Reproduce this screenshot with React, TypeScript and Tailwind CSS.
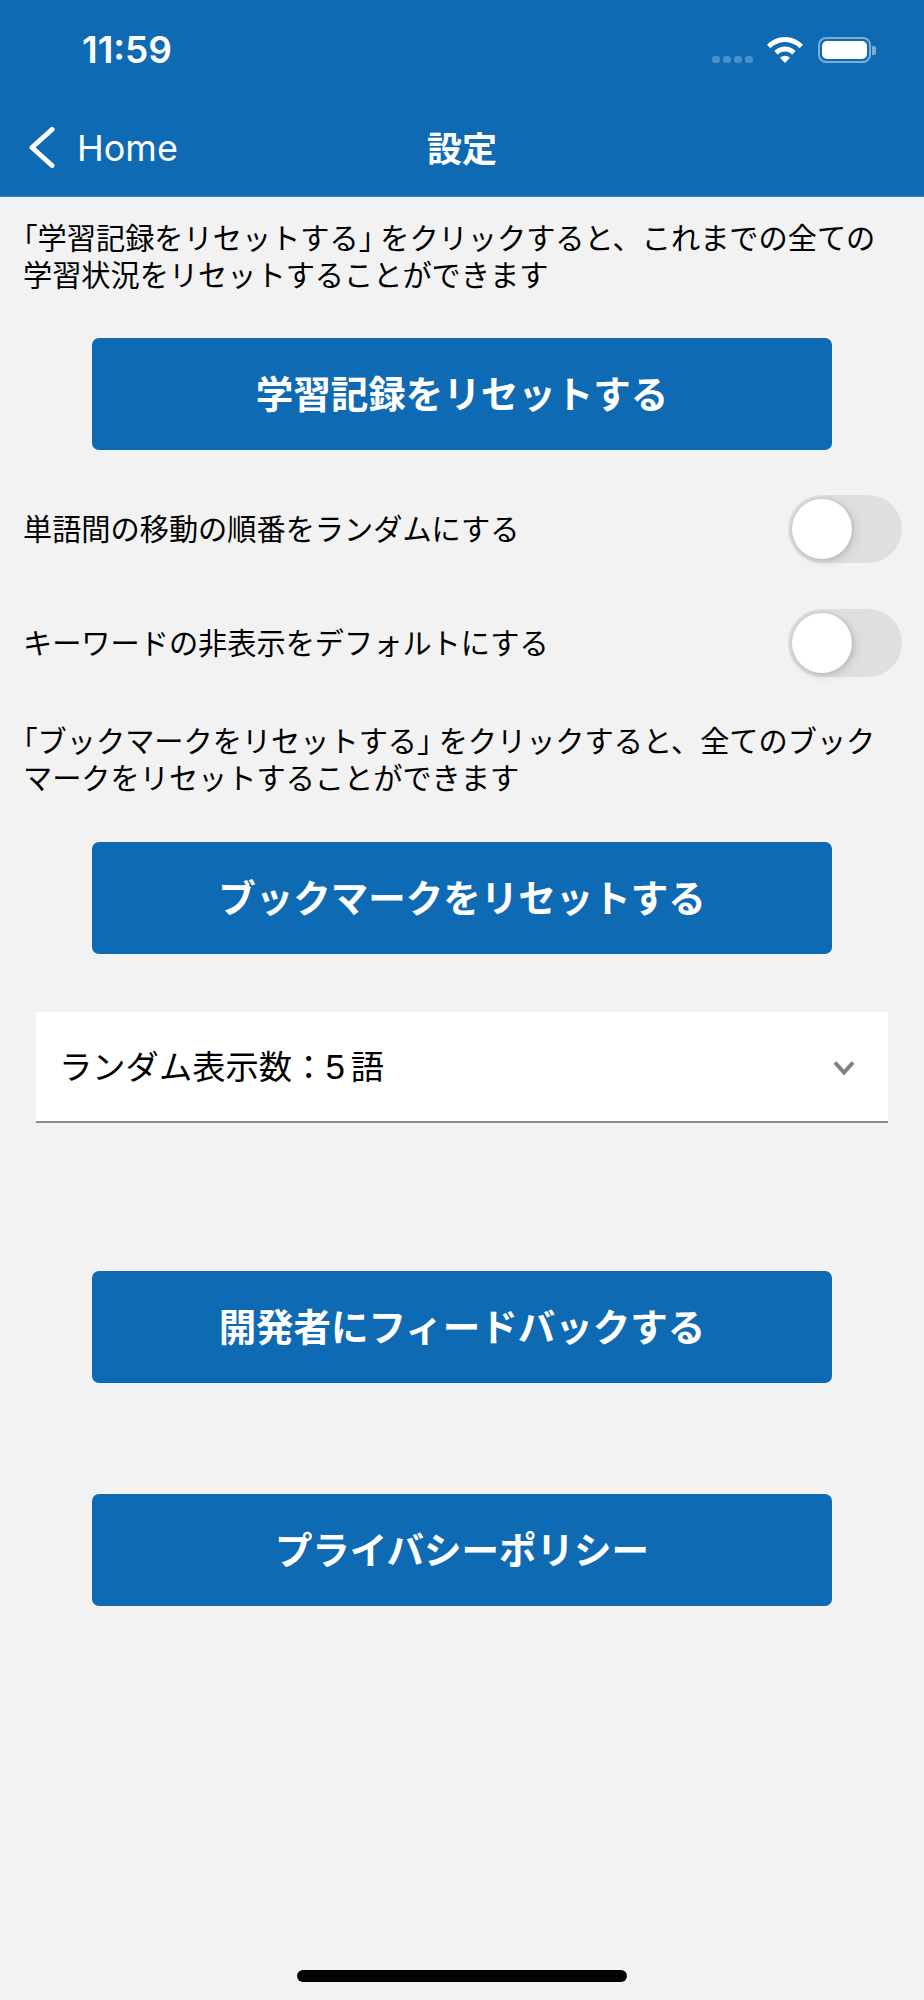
const font = "font-['Noto_Sans_CJK_JP',sans-serif]";

function ActionButton({ label }: { label: string }) {
  return (
    <button className="mx-auto flex h-[112px] w-[740px] items-center justify-center rounded-[7px] bg-[#0f6ab4] pb-[3px] text-[37.5px] font-bold text-white">
      {label}
    </button>
  );
}

function ToggleRow({ label }: { label: string }) {
  return (
    <div className="flex h-[70px] items-center justify-between pl-[23px] pr-[22px]">
      <span className="pb-[5px] text-[29.2px] leading-[40px] text-black">{label}</span>
      <div className="flex h-[68px] w-[114px] items-center rounded-full bg-[#dfdfe1] pl-[4px]">
        <div className="h-[60px] w-[60px] rounded-full bg-white shadow-[0_0_4px_rgba(0,0,0,0.15),3px_3px_8px_rgba(0,0,0,0.12)]" />
      </div>
    </div>
  );
}

function Quoted({ text, rest, second }: { text: string; rest: string; second: string }) {
  return (
    <div className="pl-[23px] text-[29.2px] leading-[37px] text-black whitespace-nowrap">
      <p>
        <span className="[font-feature-settings:'halt']">「</span>
        <span>{text}</span>
        <span className="mr-[7px] [font-feature-settings:'halt']">」</span>
        <span>{rest}</span>
      </p>
      <p>{second}</p>
    </div>
  );
}

export default function App() {
  return (
    <div className={`${font} flex h-[2000px] w-[924px] flex-col overflow-hidden bg-[#f2f2f2]`}>
      {/* Status bar + nav */}
      <div className="h-[197px] shrink-0 border-b border-[#3a80bb] bg-[#0f6ab4]">
        <div className="flex h-[100px] items-center justify-between pl-[82px] pr-[48px]">
          <span className="font-['Inter',sans-serif] text-[37px] font-semibold text-white">11:59</span>
          <div className="flex items-center">
            <div className="mr-[14px] mt-[19px] flex gap-[3px]">
              {[0, 1, 2, 3].map((i) => (
                <div key={i} className="h-[7px] w-[8px] rounded-[3px] bg-white/25" />
              ))}
            </div>
            <svg width="36" height="26" viewBox="1.5 4 33 23" preserveAspectRatio="none" className="mr-[15px]">
              <path d="M18 4C11.5 4 6 6.6 1.5 10.8L4.6 14C8.2 10.6 12.8 8.5 18 8.5S27.8 10.6 31.4 14L34.5 10.8C30 6.6 24.500 4 18 4Z" fill="#fff" />
              <path d="M18 12.500C14.300 12.500 10.900 14 8.300 16.400L11.400 19.600C13.200 17.900 15.500 16.900 18 16.900S22.800 17.900 24.600 19.600L27.700 16.400C25.100 14 21.700 12.500 18 12.500Z" fill="#fff" />
              <path d="M18 20.500C16.300 20.500 14.700 21.200 13.500 22.300L18 27L22.500 22.300C21.300 21.200 19.700 20.500 18 20.500Z" fill="#fff" />
            </svg>
            <div className="flex items-center">
              <div className="flex h-[26px] w-[53px] items-center justify-center rounded-[8px] border-2 border-white/45">
                <div className="h-[18px] w-[45px] rounded-[5px] bg-white" />
              </div>
              <div className="ml-[1px] h-[9px] w-[4px] rounded-r-[2px] bg-white/45" />
            </div>
          </div>
        </div>
        <div className="relative flex h-[94px] items-center justify-center">
          <div className="absolute left-[28px] top-[26px] flex items-center">
            <svg width="27" height="44" viewBox="0 0 27 44" fill="none">
              <path d="M24 3.500L4 21.500L24 39.500" stroke="#fff" strokeWidth="5" strokeLinecap="round" strokeLinejoin="round" />
            </svg>
            <span className="ml-[22px] font-['Inter',sans-serif] text-[36px] leading-[44px] text-white">Home</span>
          </div>
          <span className="text-[35px] font-bold text-white">設定</span>
        </div>
      </div>

      {/* Content */}
      <div className="mt-[21px]">
        <Quoted text="学習記録をリセットする" rest="をクリックすると、これまでの全ての" second="学習状況をリセットすることができます" />
      </div>
      <div className="mt-[46px]">
        <ActionButton label="学習記録をリセットする" />
      </div>
      <div className="mt-[44px]">
        <ToggleRow label="単語間の移動の順番をランダムにする" />
      </div>
      <div className="mt-[44px]">
        <ToggleRow label="キーワードの非表示をデフォルトにする" />
      </div>
      <div className="mt-[43px]">
        <Quoted text="ブックマークをリセットする" rest="をクリックすると、全てのブック" second="マークをリセットすることができます" />
      </div>
      <div className="mt-[47px]">
        <ActionButton label="ブックマークをリセットする" />
      </div>

      <div className="mx-[36px] mt-[58px] flex h-[111px] items-center justify-between border-b-2 border-[#8a8a8a] bg-white pl-[23px] pr-[32px] pt-[3px]">
        <span className="pb-[2px] text-[33.3px] text-black">
          ランダム表示数：<span className="mr-[6px] font-['Liberation_Sans',sans-serif] text-[35px]">5</span>語
        </span>
        <svg width="24" height="16" viewBox="0 0 24 16" fill="none">
          <path d="M3 2.500L12 12.500L21 2.500" stroke="#808080" strokeWidth="4" />
        </svg>
      </div>

      <div className="mt-[148px]">
        <ActionButton label="開発者にフィードバックする" />
      </div>
      <div className="mt-[111px]">
        <ActionButton label="プライバシーポリシー" />
      </div>

      <div className="mt-auto mb-[18px] h-[12px] w-[330px] self-center rounded-[6px] bg-black" />
    </div>
  );
}
